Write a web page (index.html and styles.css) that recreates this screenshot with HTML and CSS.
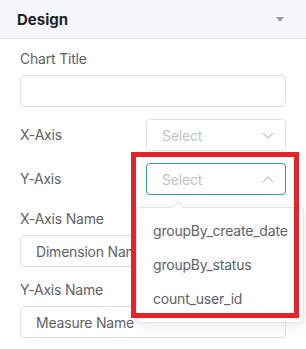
FILE: index.html
```html
<!DOCTYPE html>
<html lang="en">

<head>
    <meta charset="UTF-8">
    <meta name="viewport" content="width=device-width, initial-scale=1.0">
    <title>Design</title>
    <link rel="stylesheet" href="styles.css">
</head>

<body>
    <div class="panel-header">
        <span class="panel-title">Design</span>
        <span class="caret"></span>
    </div>

    <div class="panel-body">
        <div class="field">
            <div class="field-label">Chart Title</div>
            <div class="input"></div>
        </div>

        <div class="field field-row">
            <div class="field-label">X-Axis</div>
            <div class="select">
                <span class="placeholder">Select</span>
                <svg class="chevron" width="12" height="7" viewBox="0 0 12 7">
                    <path d="M1 1 L6 6 L11 1" fill="none" stroke="#c0c4cc" stroke-width="1.2"/>
                </svg>
            </div>
        </div>

        <div class="field field-row">
            <div class="field-label">Y-Axis</div>
            <div class="select is-open">
                <span class="placeholder">Select</span>
                <svg class="chevron" width="12" height="7" viewBox="0 0 12 7">
                    <path d="M1 6 L6 1 L11 6" fill="none" stroke="#c0c4cc" stroke-width="1.2"/>
                </svg>

                <div class="dropdown">
                    <span class="dropdown-arrow"></span>
                    <ul class="dropdown-list">
                        <li>groupBy_create_date</li>
                        <li>groupBy_status</li>
                        <li>count_user_id</li>
                    </ul>
                </div>
            </div>
        </div>

        <div class="field field-gap">
            <div class="field-label">X-Axis Name</div>
            <div class="input">Dimension Name</div>
        </div>

        <div class="field">
            <div class="field-label">Y-Axis Name</div>
            <div class="input">Measure Name</div>
        </div>
    </div>

    <div class="highlight"></div>
</body>

</html>
```

FILE: styles.css
```css
body {
    margin: 0;
    width: 306px;
    height: 349px;
    overflow: hidden;
    background: #fff;
    font-family: Inter, "Noto Sans", Arial, sans-serif;
    letter-spacing: -0.2px;
    color: #606266;
}

.panel-header {
    height: 38px;
    display: flex;
    align-items: center;
    justify-content: space-between;
    padding: 0 22px 0 17px;
    background: #f5f7fa;
    border-bottom: 1px solid #e4e7ed;
}

.panel-title {
    font-size: 15px;
    font-weight: 700;
    letter-spacing: 0;
    color: #1f2329;
}

.caret {
    width: 0;
    height: 0;
    border-left: 4px solid transparent;
    border-right: 4px solid transparent;
    border-top: 5px solid #999;
}

.panel-body {
    padding: 9px 20px;
}

.field {
    margin-bottom: 12px;
}

.field-gap {
    margin-top: 13px;
}

.field-label {
    font-size: 14px;
    line-height: 22px;
    margin-bottom: 5px;
}

.field-row {
    display: flex;
    align-items: center;
    justify-content: space-between;
}

.field-row .field-label {
    margin-bottom: 0;
}

.input,
.select {
    box-sizing: border-box;
    height: 32px;
    display: flex;
    align-items: center;
    padding: 0 15px;
    border: 1px solid #dcdfe6;
    border-radius: 4px;
    font-size: 14px;
    color: #606266;
    background: #fff;
}

.select {
    position: relative;
    width: 140px;
    justify-content: space-between;
    padding-right: 11px;
}

.select.is-open {
    border-color: #3a9e90;
}

.placeholder {
    color: #c0c4cc;
}

.chevron {
    display: block;
}

.dropdown {
    position: absolute;
    top: 43px;
    left: -11px;
    width: 168px;
    z-index: 2;
}

.dropdown-arrow {
    position: absolute;
    top: -4px;
    left: 38px;
    width: 7px;
    height: 7px;
    background: #fff;
    border-left: 1px solid #e4e7ed;
    border-top: 1px solid #e4e7ed;
    transform: rotate(45deg);
}

.dropdown-list {
    list-style: none;
    margin: 0;
    padding: 6px 0;
    background: #fff;
    border: 1px solid #e4e7ed;
    border-radius: 4px;
    box-shadow: 0 2px 12px rgba(0, 0, 0, 0.1);
}

.dropdown-list li {
    height: 34px;
    line-height: 34px;
    padding: 0 16px;
    font-size: 14px;
    color: #606266;
}

.highlight {
    position: absolute;
    left: 131px;
    top: 152px;
    width: 168px;
    height: 166px;
    box-sizing: border-box;
    border: 5px solid #e3242b;
    z-index: 3;
}
```
